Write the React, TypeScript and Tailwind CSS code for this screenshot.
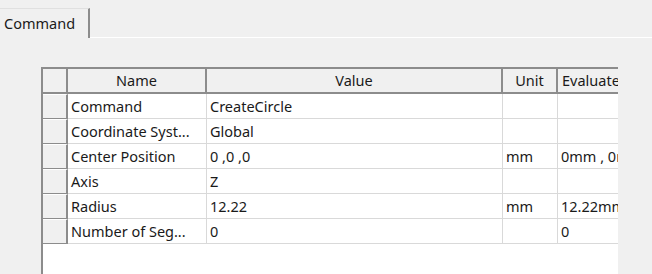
const rows = [
  { name: 'Command', value: 'CreateCircle', unit: '', evaluated: '' },
  { name: 'Coordinate Syst...', value: 'Global', unit: '', evaluated: '' },
  { name: 'Center Position', value: '0 ,0 ,0', unit: 'mm', evaluated: '0mm , 0mm , 0mm' },
  { name: 'Axis', value: 'Z', unit: '', evaluated: '' },
  { name: 'Radius', value: '12.22', unit: 'mm', evaluated: '12.22mm' },
  { name: 'Number of Seg...', value: '0', unit: '', evaluated: '0' },
]

const cols = 'grid grid-cols-[25px_139px_296px_55px_80px]'

function HeaderCell({ children }: { children?: React.ReactNode }) {
  return (
    <div className="h-[25px] bg-[#f0f0f0] border-r-2 border-b-2 border-[#8c8c8c] flex items-center justify-center whitespace-nowrap overflow-hidden">
      {children}
    </div>
  )
}

function Cell({ children }: { children?: React.ReactNode }) {
  return (
    <div className="h-[25px] bg-white border-r border-b border-[#d9d9d9] flex items-center px-[3px] whitespace-nowrap overflow-hidden">
      {children}
    </div>
  )
}

export default function App() {
  return (
    <div
      className="w-[652px] h-[274px] bg-[#f0f0f0] overflow-hidden text-[14.5px] leading-none text-[#1a1a1a]"
      style={{ fontFamily: '"Noto Sans", "Noto Sans CJK SC", sans-serif' }}
    >
      <div className="flex items-end h-[38px] pt-[8px]">
        <div className="h-[30px] w-[90px] bg-[#f0f0f0] border-t border-[#e0e0e0] border-r-2 border-r-[#8c8c8c] flex items-center pl-[4px]">
          Command
        </div>
        <div className="flex-1 border-b border-white h-full" />
      </div>
      <div className="pl-[41px] pt-[29px]">
        <div className="w-[577px] h-[220px] bg-white border-l-2 border-t-2 border-[#8c8c8c] overflow-hidden">
          <div className={cols}>
            <HeaderCell />
            <HeaderCell>Name</HeaderCell>
            <HeaderCell>Value</HeaderCell>
            <HeaderCell>Unit</HeaderCell>
            <div className="h-[25px] bg-[#f0f0f0] border-b-2 border-[#8c8c8c] flex items-center pl-[4px] whitespace-nowrap overflow-hidden">
              Evaluated
            </div>
          </div>
          {rows.map((r) => (
            <div key={r.name} className={cols}>
              <div className="h-[25px] bg-[#f0f0f0] border-r-2 border-b border-b-[#8c8c8c] border-r-[#8c8c8c] border-t border-t-white" />
              <Cell>{r.name}</Cell>
              <Cell>{r.value}</Cell>
              <Cell>{r.unit}</Cell>
              <Cell>{r.evaluated}</Cell>
            </div>
          ))}
        </div>
      </div>
    </div>
  )
}
